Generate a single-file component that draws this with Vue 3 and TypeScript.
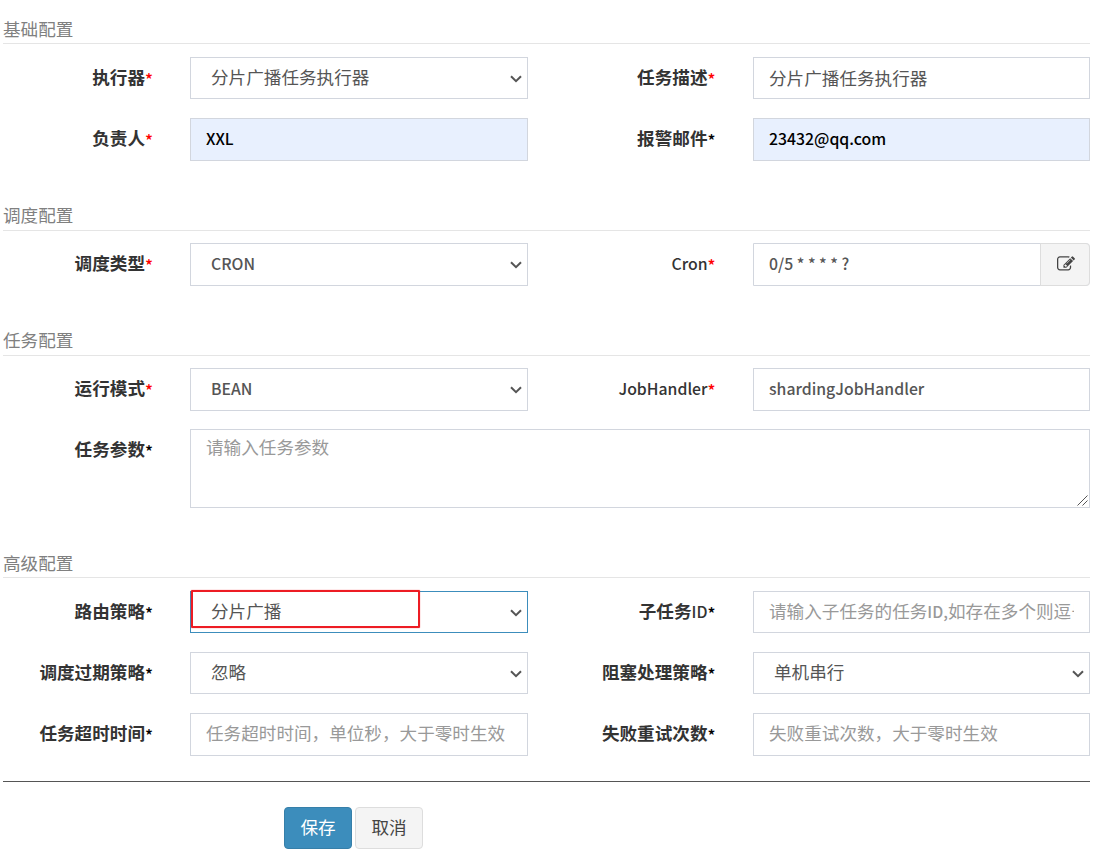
<script setup lang="ts">
type Kind = 'select' | 'input' | 'textarea' | 'addon'

interface Field {
  label: string
  kind: Kind
  text: string
  required?: boolean
  placeholder?: boolean
  filled?: boolean
  focused?: boolean
}

interface Section {
  key: string
  title: string
  rows: Field[][]
}

interface Run {
  text: string
  latin: boolean
}

const sections: Section[] = [
  {
    key: 'basic',
    title: '基础配置',
    rows: [
      [
        { label: '执行器', kind: 'select', text: '分片广播任务执行器', required: true },
        { label: '任务描述', kind: 'input', text: '分片广播任务执行器', required: true },
      ],
      [
        { label: '负责人', kind: 'input', text: 'XXL', required: true, filled: true },
        { label: '报警邮件', kind: 'input', text: '23432@qq.com', filled: true },
      ],
    ],
  },
  {
    key: 'schedule',
    title: '调度配置',
    rows: [
      [
        { label: '调度类型', kind: 'select', text: 'CRON', required: true },
        { label: 'Cron', kind: 'addon', text: '0/5 * * * * ?', required: true },
      ],
    ],
  },
  {
    key: 'job',
    title: '任务配置',
    rows: [
      [
        { label: '运行模式', kind: 'select', text: 'BEAN', required: true },
        { label: 'JobHandler', kind: 'input', text: 'shardingJobHandler', required: true },
      ],
      [{ label: '任务参数', kind: 'textarea', text: '请输入任务参数', placeholder: true }],
    ],
  },
  {
    key: 'advanced',
    title: '高级配置',
    rows: [
      [
        { label: '路由策略', kind: 'select', text: '分片广播', focused: true },
        { label: '子任务ID', kind: 'input', text: '请输入子任务的任务ID,如存在多个则逗号', placeholder: true },
      ],
      [
        { label: '调度过期策略', kind: 'select', text: '忽略' },
        { label: '阻塞处理策略', kind: 'select', text: '单机串行' },
      ],
      [
        { label: '任务超时时间', kind: 'input', text: '任务超时时间，单位秒，大于零时生效', placeholder: true },
        { label: '失败重试次数', kind: 'input', text: '失败重试次数，大于零时生效', placeholder: true },
      ],
    ],
  },
]

// Latin runs are set smaller and heavier than the Chinese text around them.
function runs(text: string): Run[] {
  return (text.match(/[\x20-\x7e]+|[^\x20-\x7e]+/g) ?? []).map((part) => ({
    text: part,
    latin: /^[\x20-\x7e]/.test(part),
  }))
}
</script>

<template>
  <form class="form" @submit.prevent>
    <section v-for="section in sections" :key="section.key" :class="['section', section.key]">
      <h2 class="title">{{ section.title }}</h2>
      <div class="rows">
        <div v-for="(row, r) in section.rows" :key="r" class="row">
          <template v-for="field in row" :key="field.label">
            <div class="label">
              <span v-for="(run, i) in runs(field.label)" :key="i" :class="{ latin: run.latin }">{{ run.text }}</span><span :class="['star', { required: field.required }]">*</span>
            </div>
            <div :class="['control', field.kind, { placeholder: field.placeholder, filled: field.filled, focused: field.focused }]">
              <div class="value">
                <span v-for="(run, i) in runs(field.text)" :key="i" :class="{ latin: run.latin }">{{ run.text }}</span>
              </div>
              <svg v-if="field.kind === 'select'" class="chevron" viewBox="0 0 12 8" width="12" height="8">
                <path d="M1 1.2 6 6.2 11 1.2" fill="none" stroke="#555" stroke-width="2" />
              </svg>
              <div v-if="field.kind === 'addon'" class="edit">
                <svg viewBox="0 0 1792 1792" width="18" height="18">
                  <path fill="#444" d="M888 1184l116-116-152-152-116 116v56h96v96h56zm440-720q-16-16-33 1l-350 350q-17 17-1 33t33-1l350-350q17-17 1-33zm80 594v190q0 119-84.500 203.500t-203.500 84.500h-832q-119 0-203.500-84.500t-84.500-203.500v-832q0-119 84.500-203.500t203.500-84.500h832q63 0 117 25 15 7 18 23 3 17-9 29l-49 49q-14 14-32 8-23-6-45-6h-832q-66 0-113 47t-47 113v832q0 66 47 113t113 47h832q66 0 113-47t47-113v-126q0-13 9-22l64-64q15-15 35-7t20 29zm-96-738l288 288-672 672h-288v-288zm444 132l-92 92-288-288 92-92q28-28 68-28t68 28l152 152q28 28 28 68t-28 68z" />
                </svg>
              </div>
              <svg v-if="field.kind === 'textarea'" class="grip" viewBox="0 0 11 11" width="11" height="11">
                <path d="M.5 10.500 10.500.5M5.500 10.500l5-5" fill="none" stroke="#555" stroke-width="1" />
              </svg>
              <div v-if="field.focused" class="marker"></div>
            </div>
          </template>
        </div>
      </div>
    </section>
    <div class="actions">
      <button type="button" class="btn primary">保存</button>
      <button type="button" class="btn">取消</button>
    </div>
  </form>
</template>

<style>
body {
  margin: 0;
  background: #fff;
}
</style>

<style scoped>
.form {
  box-sizing: border-box;
  width: 1100px;
  height: 864px;
  padding: 0 10px 0 3px;
  overflow: hidden;
  font-family: "Noto Sans CJK SC", sans-serif;
  font-size: 17.6px;
  color: #555;
}
.form * {
  box-sizing: border-box;
}
.section {
  display: flex;
  flex-direction: column;
  height: 125px;
}
.basic {
  height: 187px;
}
.job {
  height: 222px;
}
.advanced {
  height: 248px;
  border-bottom: 1px solid #555;
}
.title {
  display: flex;
  align-items: flex-end;
  flex: none;
  height: 44px;
  margin: 0;
  padding-bottom: 1px;
  border-bottom: 1px solid #e5e5e5;
  line-height: 26px;
  font-size: 17.6px;
  font-weight: 400;
  color: #808080;
}
.schedule .title,
.job .title {
  padding-bottom: 2px;
}
.rows {
  display: flex;
  flex-direction: column;
  gap: 19px;
  padding-top: 13px;
}
.schedule .rows,
.job .rows {
  padding-top: 12px;
}
.job .rows {
  gap: 18px;
}
.row {
  display: grid;
  grid-template-columns: 150px 375px 187.5px 374.5px;
}
.label {
  height: 42px;
  line-height: 39px;
  text-align: right;
  white-space: nowrap;
  font-weight: 700;
  color: #333;
}
.latin {
  font-size: 15.8px;
  font-weight: 500;
}
.star {
  font-size: 16.5px;
  font-weight: 500;
  line-height: 1;
  vertical-align: -1.5px;
  color: #000;
}
.star.required {
  color: #f00;
}
.control {
  position: relative;
  display: flex;
  height: 42px;
  margin-left: 37px;
  border: 1px solid #d2d6de;
  background: #fff;
}
.control:nth-child(4) {
  margin-left: 37.5px;
}
.schedule .control,
.basic .row:nth-child(2) .control,
.job .control,
.advanced .row:nth-child(3) .control {
  height: 43px;
}
.job .textarea {
  grid-column: 2 / -1;
  height: 79px;
}
.value {
  flex: 1;
  min-width: 0;
  margin: 0 15px;
  overflow: hidden;
  line-height: 38px;
  white-space: pre;
}
.basic .row:first-child .input .value {
  line-height: 40px;
}
.select .value {
  margin-left: 20px;
}
.textarea .value {
  line-height: 34px;
}
.placeholder {
  color: #999;
}
.filled {
  background: #e8f0fe;
  color: #000;
}
.focused {
  border-color: #3c8dbc;
}
.chevron {
  position: absolute;
  right: 5px;
  top: 17px;
}
.grip {
  position: absolute;
  right: 1px;
  bottom: 1px;
}
.marker {
  position: absolute;
  left: 0;
  top: -2px;
  width: 229px;
  height: 38px;
  border: 2px solid #ed1c24;
  border-radius: 1px;
  box-shadow: 0 0 1px #ed1c24;
}
.edit {
  display: flex;
  align-items: center;
  justify-content: center;
  width: 50px;
  margin: -1px -1px -1px 0;
  padding: 0 0 2px 1px;
  border: 1px solid #ddd;
  border-radius: 0 4px 4px 0;
  background: #f4f4f4;
}
.addon {
  border-radius: 0 4px 4px 0;
}
.actions {
  display: flex;
  gap: 3px;
  padding: 25px 0 0 281px;
}
.btn {
  width: 68px;
  height: 42px;
  padding: 0 0 2px;
  border: 1px solid #ddd;
  border-radius: 4px;
  background: #f4f4f4;
  color: #444;
  font: 400 17.6px/38px "Noto Sans CJK SC", sans-serif;
}
.btn.primary {
  border-color: #367fa9;
  background: #3c8dbc;
  color: #fff;
}
</style>
